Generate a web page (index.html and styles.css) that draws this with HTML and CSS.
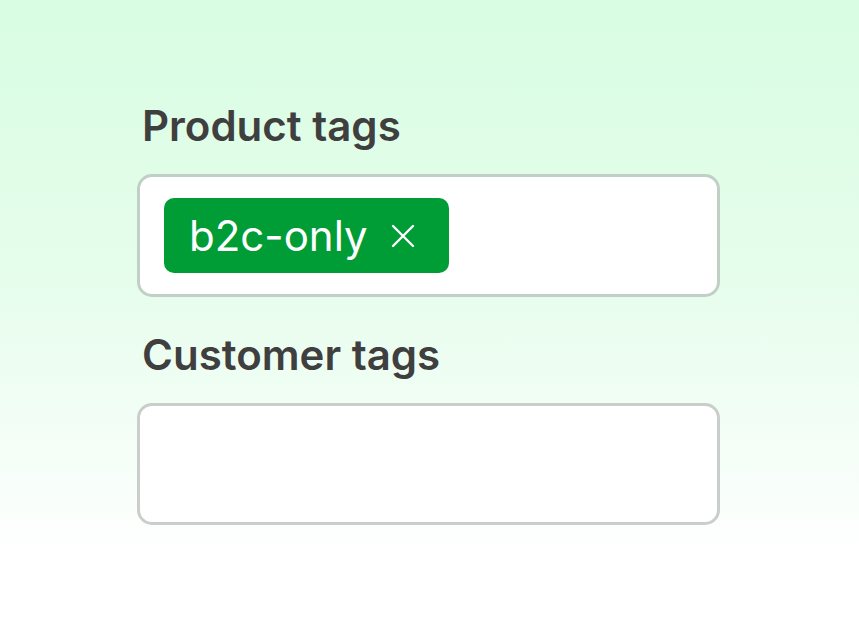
FILE: index.html
```html
<!DOCTYPE html>
<html lang="en">
<head>
<meta charset="utf-8">
<title>Tags</title>
<link rel="stylesheet" href="styles.css">
</head>
<body>
<main class="page">
  <section class="form">
    <label class="label">Product tags</label>
    <div class="field">
      <span class="tag">
        <span class="tag-text">b2c-only</span>
        <svg class="tag-x" viewBox="0 0 24 24" width="24" height="24" aria-hidden="true">
          <path d="M2 2 L22 22 M22 2 L2 22" stroke="#fff" stroke-width="2.4" stroke-linecap="round" fill="none"/>
        </svg>
      </span>
    </div>
    <label class="label label-second">Customer tags</label>
    <div class="field field-empty"></div>
  </section>
</main>
</body>
</html>
```
FILE: styles.css
```css
html, body {
  margin: 0;
  padding: 0;
}
body {
  width: 859px;
  height: 624px;
  overflow: hidden;
  background: linear-gradient(180deg, #d8fde2 0%, #e6fdec 45%, #ffffff 90%);
  font-family: Inter, "Noto Sans", sans-serif;
}
.page {
  padding: 102px 0 0 137px;
}
.form {
  width: 583px;
  display: flex;
  flex-direction: column;
}
.label {
  font-size: 42px;
  line-height: 48px;
  font-weight: 600;
  color: #3f3f3f;
  margin-left: 5px;
  margin-bottom: 24px;
}
.label-second {
  margin-top: 34px;
}
.field {
  box-sizing: border-box;
  border: 3px solid #c0d0c6;
  border-radius: 15px;
  background: #ffffff;
  padding: 21px 24px;
  height: 123px;
  display: flex;
  align-items: center;
}
.field-empty {
  border-color: #c9cecb;
  height: 122px;
}
.tag {
  display: inline-flex;
  align-items: center;
  height: 75px;
  box-sizing: border-box;
  padding: 0 34px 0 25px;
  background: #009c36;
  border-radius: 10px;
  color: #ffffff;
  gap: 23px;
}
.tag-text {
  font-size: 42px;
  line-height: 48px;
  font-weight: 400;
}
.tag-x {
  display: block;
}
```
